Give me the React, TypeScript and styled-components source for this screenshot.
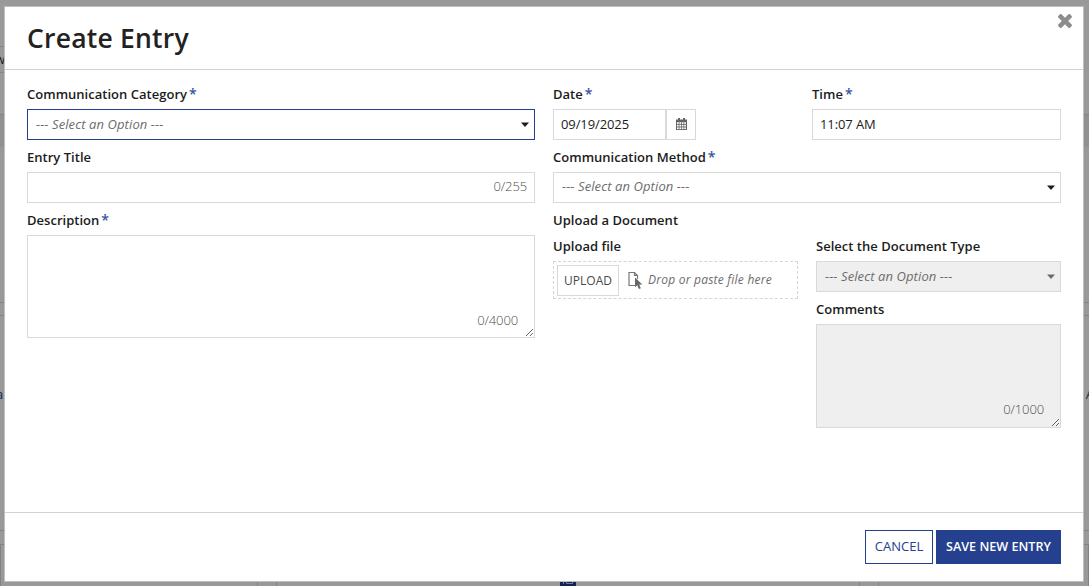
import React from "react";
import styled, { createGlobalStyle } from "styled-components";

const GlobalStyle = createGlobalStyle`
  *, *::before, *::after { box-sizing: border-box; }
  body {
    margin: 0;
    overflow: hidden;
    background: #999;
    color: #1c1c1c;
    font-family: "Open Sans", "Noto Sans", sans-serif;
    font-size: 13px;
  }
`;

const Screen = styled.div`
  position: relative;
  height: 586px;
  overflow: hidden;
`;

/* Dimmed page behind the dialog */
const Page = styled.div`
  display: flex;
  flex-direction: column;
  height: 100%;
`;
const Tabs = styled.div`
  width: 50%;
  height: 27px;
  margin-top: 46px;
  border: solid #858585;
  border-width: 1px 0;
  line-height: 24px;
  color: #1b2026;
  text-indent: -5px;
`;
const Band = styled.div`
  height: 33px;
  margin-top: 41px;
  border-top: 1px solid #858585;
  background: #919191;
`;
const Panel = styled.div<{ $height: number; $top?: boolean }>`
  display: flex;
  align-items: center;
  justify-content: space-between;
  height: ${(p) => p.$height}px;
  border-bottom: 1px solid #828282;
  border-top: ${(p) => (p.$top ? "1px solid #828282" : "0")};
  color: #14284f;
`;
const Edge = styled.span<{ $shift: number }>`
  margin: 0 ${(p) => p.$shift}px;
  margin-top: -59px;
`;
const Gutter = styled.div`
  height: 12px;
`;
const Cards = styled.div`
  flex: 1;
  display: grid;
  grid-template-columns: 258px 584px 1fr;
  column-gap: 18px;
  margin-top: 13px;
`;
const Card = styled.div`
  display: flex;
  align-items: flex-end;
  justify-content: center;
  border: 1px solid #828282;
  border-bottom: 0;
`;

/* Dialog */
const Overlay = styled.div`
  position: absolute;
  inset: 0;
  padding: 6px 5px 4px 4px;
`;
const Dialog = styled.div`
  display: flex;
  flex-direction: column;
  height: 576px;
  border: 1px solid #bebebe;
  background: #fff;
`;
const Header = styled.header`
  display: flex;
  justify-content: space-between;
  align-items: flex-start;
  height: 63px;
  padding: 7px 11px 0 22px;
  border-bottom: 1px solid #d2d2d2;
`;
const Title = styled.h1`
  margin: 7px 0 0;
  color: #222;
  font-size: 26.500px;
  font-weight: 600;
  letter-spacing: 0.22px;
  line-height: 35px;
`;
const Close = styled.button`
  display: flex;
  padding: 0;
  border: 0;
  background: none;
`;
const Body = styled.main`
  flex: 1;
  display: grid;
  grid-template-columns: 1fr 1fr;
  column-gap: 18px;
  padding: 14px 22px 0;
`;
const Stack = styled.div`
  display: flex;
  flex-direction: column;
  gap: 7px;
`;
const Split = styled.div<{ $gap: number }>`
  display: grid;
  grid-template-columns: 1fr 1fr;
  column-gap: ${(p) => p.$gap}px;
`;
const Label = styled.div`
  height: 25px;
  font-weight: 600;
  letter-spacing: 0.02px;
  line-height: 20px;
  white-space: nowrap;
`;
const Star = styled.span`
  margin-left: 2px;
  color: #3a53a0;
  font-size: 14px;
  line-height: 1;
`;
const Box = styled.div<{ $focus?: boolean; $disabled?: boolean }>`
  display: flex;
  align-items: center;
  justify-content: space-between;
  height: 31px;
  padding: 0 5px 0 7px;
  border: 1px solid ${(p) => (p.$focus ? "#24408e" : "#d9d9d9")};
  background: ${(p) => (p.$disabled ? "#efefef" : "#fff")};
  color: ${(p) => (p.$disabled ? "#6c6c6c" : "#1c1c1c")};
`;
const Value = styled.span`
  padding-bottom: 2px;
  letter-spacing: -0.1px;
`;
const Placeholder = styled.span<{ $raise: number }>`
  padding: 0 0 ${(p) => p.$raise * 2}px 1px;
  color: #6c6c6c;
  font-style: italic;
  letter-spacing: 0.1px;
`;
const Counter = styled.span`
  margin-left: auto;
  padding: 0 2px 4px 0;
  color: #4c4c4c;
  font-weight: 300;
  letter-spacing: -0.12px;
`;
const DateGroup = styled.div`
  display: flex;
`;
const DateBox = styled(Box)`
  width: 113px;
`;
const DateButton = styled.button`
  display: flex;
  align-items: center;
  justify-content: center;
  width: 30px;
  height: 31px;
  padding: 0 0 1px 1px;
  border: 1px solid #d9d9d9;
  background: #fff;
  color: #666;
`;
const AreaWrap = styled.div`
  position: relative;
  display: flex;
`;
const Area = styled.textarea<{ $height: number }>`
  width: 100%;
  height: ${(p) => p.$height}px;
  margin: 0;
  border: 1px solid #d9d9d9;
  outline: 0;
  resize: vertical;
  background: #fff;
  &:disabled { background: #efefef; }
`;
const AreaCounter = styled(Counter)<{ $bottom: number }>`
  position: absolute;
  right: 15px;
  bottom: ${(p) => p.$bottom}px;
  padding-bottom: 0;
  line-height: 18px;
`;
const Section = styled.section`
  display: flex;
  flex-direction: column;
`;
const SectionTitle = styled(Label)`
  height: 26px;
`;
const Drop = styled.div`
  display: flex;
  align-items: center;
  height: 38px;
  padding: 1px 3px 0;
  border: 1px dashed #d5d5d5;
`;
const UploadButton = styled.button`
  width: 62px;
  height: 31px;
  padding: 0;
  border: 1px solid #d9d9d9;
  background: #fff;
  color: #4a4a4a;
  font: 500 12px "Open Sans", sans-serif;
`;
const DropText = styled.span`
  margin-left: 5px;
  padding-bottom: 2px;
  color: #6c6c6c;
  font-size: 12px;
  font-style: italic;
  letter-spacing: 0.23px;
  white-space: nowrap;
`;
const DropIcon = styled.svg`
  margin-left: 9px;
`;
const Footer = styled.footer`
  display: flex;
  justify-content: flex-end;
  gap: 3px;
  height: 69px;
  padding: 17px 22px 0;
  border-top: 1px solid #d2d2d2;
`;
const Button = styled.button<{ $primary?: boolean }>`
  width: ${(p) => (p.$primary ? 125 : 68)}px;
  height: 34px;
  padding: 0 0 2px;
  border: 1px solid #24408e;
  background: ${(p) => (p.$primary ? "#24408e" : "#fff")};
  color: ${(p) => (p.$primary ? "#fff" : "#24408e")};
  font: ${(p) => (p.$primary ? "600 12.600px" : "500 13px")} "Open Sans", sans-serif;
  white-space: nowrap;
`;

const Caret = () => (
  <svg width="8" height="5" viewBox="0 0 8 5" fill="currentColor">
    <path d="M0 .5h8L4 5z" />
  </svg>
);

const CalendarIcon = () => (
  <svg width="11" height="12" viewBox="0 0 11 12" fill="currentColor">
    <path d="M2 0h2v1.500h3V0h2v1.500h2V12H0V1.500h2z" />
    {[4.2, 6.8, 9.4].map((y) =>
      [1, 3.4, 5.8, 8.2].map((x) => <rect key={`${x}-${y}`} x={x} y={y} width="1.700" height="1.700" fill="#fff" />)
    )}
  </svg>
);

const Field = ({ label, required, children }: { label: string; required?: boolean; children: React.ReactNode }) => (
  <div>
    <Label>
      {label}
      {required && <Star>*</Star>}
    </Label>
    {children}
  </div>
);

const Select = ({ focus, disabled, raise = 1 }: { focus?: boolean; disabled?: boolean; raise?: number }) => (
  <Box $focus={focus} $disabled={disabled}>
    <Placeholder $raise={raise}>--- Select an Option ---</Placeholder>
    <Caret />
  </Box>
);

export default function App() {
  return (
    <Screen>
      <GlobalStyle />
      <Page>
        <Tabs>w</Tabs>
        <Band />
        <Panel $height={156} />
        <Gutter />
        <Panel $height={216} $top>
          <Edge $shift={-4}>a</Edge>
          <Edge $shift={-5}>A</Edge>
        </Panel>
        <Cards>
          <Card />
          <Card>
            <svg width="16" height="14" viewBox="0 0 16 14">
              <path d="M0 0h16v14H0z" fill="#14234f" />
              <path d="M3.500 9v3M6.500 9v2.500h6V9" fill="none" stroke="#76809d" />
            </svg>
          </Card>
          <Card />
        </Cards>
      </Page>
      <Overlay>
        <Dialog>
          <Header>
            <Title>Create Entry</Title>
            <Close aria-label="Close">
              <svg width="14" height="14" viewBox="302 366 1188 1188" fill="#8c8c8c">
                <path d="M1490 1322q0 40-28 68l-136 136q-28 28-68 28t-68-28l-294-294-294 294q-28 28-68 28t-68-28l-136-136q-28-28-28-68t28-68l294-294-294-294q-28-28-28-68t28-68l136-136q28-28 68-28t68 28l294 294 294-294q28-28 68-28t68 28l136 136q28 28 28 68t-28 68l-294 294 294 294q28 28 28 68z" />
              </svg>
            </Close>
          </Header>
          <Body>
            <Stack>
              <Field label="Communication Category" required>
                <Select focus />
              </Field>
              <Field label="Entry Title">
                <Box>
                  <Counter>0/255</Counter>
                </Box>
              </Field>
              <Field label="Description" required>
                <AreaWrap>
                  <Area $height={103} />
                  <AreaCounter $bottom={9}>0/4000</AreaCounter>
                </AreaWrap>
              </Field>
            </Stack>
            <Stack>
              <Split $gap={10}>
                <Field label="Date" required>
                  <DateGroup>
                    <DateBox>
                      <Value>09/19/2025</Value>
                    </DateBox>
                    <DateButton aria-label="Pick a date">
                      <CalendarIcon />
                    </DateButton>
                  </DateGroup>
                </Field>
                <Field label="Time" required>
                  <Box>
                    <Value>11:07 AM</Value>
                  </Box>
                </Field>
              </Split>
              <Field label="Communication Method" required>
                <Select raise={2} />
              </Field>
              <Section>
                <SectionTitle>Upload a Document</SectionTitle>
                <Split $gap={18}>
                  <Field label="Upload file">
                    <Drop>
                      <UploadButton>UPLOAD</UploadButton>
                      <DropIcon width="15" height="19" viewBox="0 0 15 19">
                        <path d="M7 14.500H1V1.500H6.500L9.500 4.500V8M6.500 1.500V4.500H9.500" fill="none" stroke="#777" strokeWidth="1.200" />
                        <path d="M7 6.500V16.200L9.300 14.200L10.900 18L12.800 17.300L11.200 13.600H14.300z" fill="#666" />
                      </DropIcon>
                      <DropText>Drop or paste file here</DropText>
                    </Drop>
                  </Field>
                  <Stack>
                    <Field label="Select the Document Type">
                      <Select disabled />
                    </Field>
                    <Field label="Comments">
                      <AreaWrap>
                        <Area $height={104} disabled />
                        <AreaCounter $bottom={10}>0/1000</AreaCounter>
                      </AreaWrap>
                    </Field>
                  </Stack>
                </Split>
              </Section>
            </Stack>
          </Body>
          <Footer>
            <Button>CANCEL</Button>
            <Button $primary>SAVE NEW ENTRY</Button>
          </Footer>
        </Dialog>
      </Overlay>
    </Screen>
  );
}
